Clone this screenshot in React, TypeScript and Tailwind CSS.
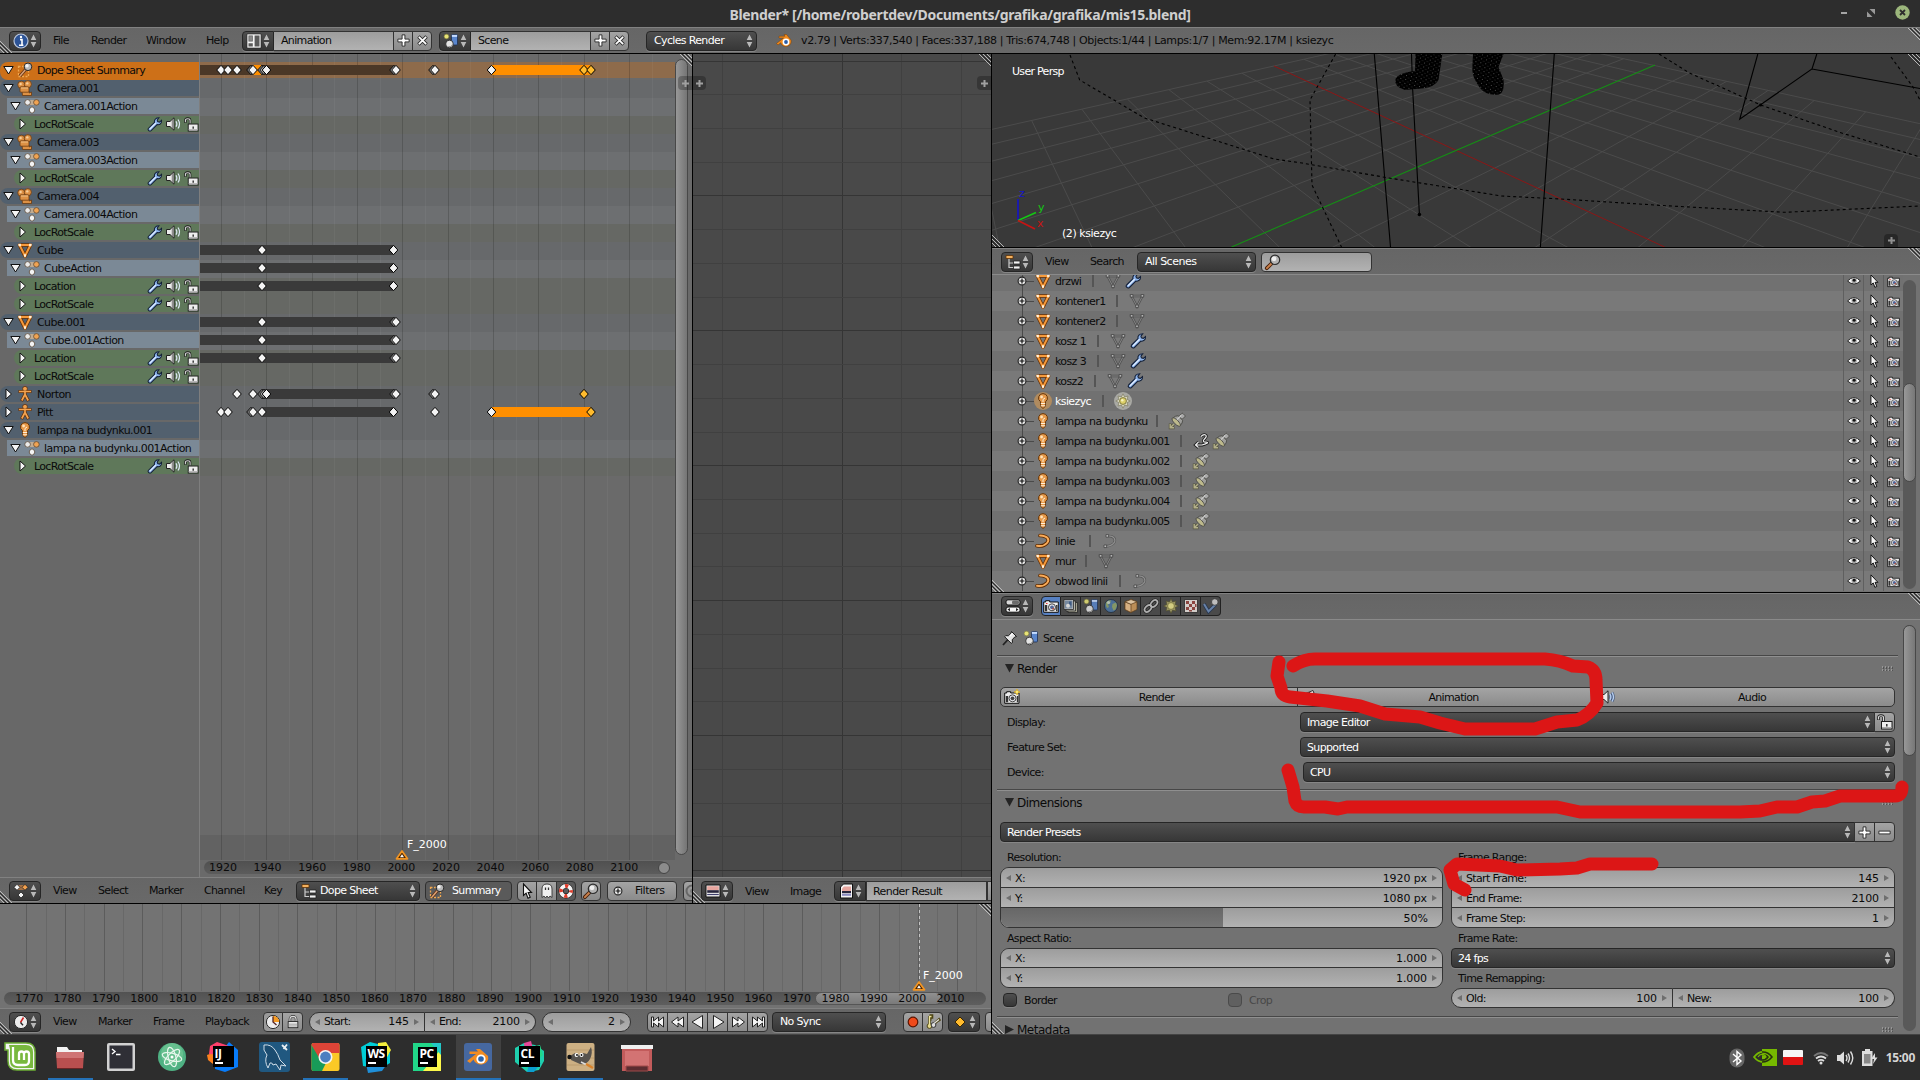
import React from "react";

type IconName = keyof typeof ICONS;

const ICONS = {
  info: (
    <g>
      <circle cx="8" cy="8" r="7" fill="#2c5396" stroke="#b9c6dc" strokeWidth="1.2" />
      <path d="M7 6.6h2v5.4M6 12.2h4.4" stroke="#fff" strokeWidth="1.6" fill="none" />
      <circle cx="8" cy="4" r="1.2" fill="#fff" />
    </g>
  ),
  layout: (
    <g>
      <path d="M1 1h14v14H1z" fill="#f4f4f4" stroke="#222" strokeWidth=".6" />
      <path d="M2.500 2.500h4.300v6H2.500zM2.500 10.200h4.300v3.300H2.500zM8.600 2.500h4.900v11H8.600z" fill="#5a5a5a" />
      <path d="M3.200 3.200h3v4.600h-3z" fill="#8a8a8a" />
    </g>
  ),
  scene: (
    <g>
      <circle cx="3.500" cy="3.500" r="2.3" fill="#e8e378" stroke="#8d8a3d" strokeWidth=".6" />
      <rect x="8.500" y="1.5" width="6" height="10.5" rx="1" fill="#5a86cc" stroke="#1d2f52" strokeWidth=".8" />
      <rect x="8.900" y="1.900" width="5.200" height="2" fill="#c5dcff" />
      <circle cx="6.500" cy="11" r="3.800" fill="#e4e4e4" stroke="#222" strokeWidth=".8" />
      <path d="M4 13a3.500 3.500 0 0 0 6-2.500 5 5 0 0 1-6 2.500" fill="#8a8a8a" />
    </g>
  ),
  blender: (
    <g>
      <path d="M.5 10.500 7.500 5H3V3.200h6L8 1.500h2.500L15 7a5 4.700 0 1 1-10.300 2.800L2 12z" fill="#f08a1d" stroke="#7a3c00" strokeWidth=".5" />
      <circle cx="10" cy="9" r="3.400" fill="#fff" />
      <circle cx="10" cy="9" r="1.900" fill="#2a5da8" />
    </g>
  ),
  summary: (
    <g>
      <rect x="1.5" y="4.500" width="10" height="10" fill="none" stroke="#f0a850" strokeWidth="1.300" strokeDasharray="2 1.500" />
      <path d="M3 14 9 7" stroke="#5a2d12" strokeWidth="3" />
      <path d="M3 14 9 7" stroke="#d9a074" strokeWidth="1.600" />
      <circle cx="11" cy="4.800" r="3.800" fill="#b9b9b9" stroke="#2a2a2a" />
      <circle cx="10" cy="3.800" r="1.700" fill="#f4f4f4" />
    </g>
  ),
  camera: (
    <g fill="#dd9145" stroke="#6a3a10" strokeWidth=".8">
      <path d="M5 11h7v2l2.500-1v3.500h-9z" />
      <circle cx="4.300" cy="4.800" r="3.600" />
      <circle cx="10.800" cy="4.200" r="3.600" />
      <rect x="3" y="6.800" width="9" height="5.400" rx="1" />
      <circle cx="3.600" cy="4" r="1.200" fill="#f6cf9c" stroke="none" />
      <circle cx="10.300" cy="3.400" r="1.200" fill="#f6cf9c" stroke="none" />
      <path d="M4 8h7" stroke="#f6cf9c" />
    </g>
  ),
  action: (
    <g stroke="#5a4937" strokeWidth=".8">
      <path d="M3 2h10v5H3z" fill="#d8b890" stroke="none" opacity=".75" />
      <circle cx="3.600" cy="4.400" r="2.800" fill="#ebebeb" />
      <circle cx="12.400" cy="4.400" r="2.800" fill="#f0a352" />
      <path d="M8 8.800q2.800 1 2.800 3.200T8 15.300Q5.200 14.200 5.200 12T8 8.800z" fill="#f4f4f4" />
    </g>
  ),
  dope: (
    <g stroke="#222" strokeWidth=".8">
      <path d="M4 2h8v5H4z" fill="#a06f45" stroke="none" />
      <path d="m4 1.300 3 3-3 3-3-3zM8 9l3 3-3 3-3-3z" fill="#f4f4f4" />
      <path d="m12 1.300 3 3-3 3-3-3z" fill="#f3a14e" />
    </g>
  ),
  mesh: (
    <g>
      <path d="M2.500 3h11L8 14z" fill="none" stroke="#6b3000" strokeWidth="3.600" strokeLinejoin="round" />
      <path d="M2.500 3h11L8 14z" fill="none" stroke="#f59a3c" strokeWidth="2" />
      <path d="M1.500 1.800h2.400v2.400H1.500zM12.100 1.800h2.400v2.400h-2.400zM6.900 12.300h2.200v2.400H6.900z" fill="#fff1dc" />
    </g>
  ),
  meshdata: (
    <g>
      <path d="M2.500 3h11L8 13.500z" fill="none" stroke="#505050" strokeWidth="2.400" />
      <path d="M2.500 3h11L8 13.500z" fill="none" stroke="#858585" strokeWidth="1" />
      <path d="M1.300 1.500h2.600v2.600H1.300zM12.100 1.500h2.600v2.600h-2.600zM6.700 12h2.600v2.600H6.700z" fill="#b5b5b5" stroke="#444" strokeWidth=".8" />
    </g>
  ),
  armature: (
    <g>
      <path d="M1.500 5.500h13M8 5v4M8 8.500 4.500 15M8 8.500 11.500 15" stroke="#63300a" strokeWidth="3.200" fill="none" />
      <circle cx="8" cy="2.800" r="2.400" fill="#f2a250" stroke="#63300a" strokeWidth=".8" />
      <path d="M2 5.500h12M8 5v4M8 8.500 4.800 14.500M8 8.500l3.200 6" stroke="#f2a250" strokeWidth="1.700" fill="none" />
    </g>
  ),
  lamp: (
    <g>
      <path d="M8 .6a4.400 4.400 0 0 1 2.600 8l-.3 4.600L8 15.600l-2.300-2.400-.3-4.600A4.400 4.400 0 0 1 8 .6z" fill="#e79a4a" stroke="#643408" strokeWidth="1" />
      <path d="M5.800 10.500h4.400M5.800 12.700h4.400" stroke="#fff0da" strokeWidth="1.100" />
      <circle cx="6.600" cy="4" r="1.400" fill="#ffe2b8" />
      <path d="M8 9V6.500l2-1.500" stroke="#fff0da" fill="none" />
    </g>
  ),
  curve: (
    <g fill="none">
      <path d="M5 2.500c8 .5 10 4 7 7.500-2.500 2.800-6 3.500-10 2.800" stroke="#5e2b00" strokeWidth="3.600" strokeLinecap="round" />
      <path d="M5 2.500c8 .5 10 4 7 7.500-2.500 2.800-6 3.500-10 2.800" stroke="#f9ac5a" strokeWidth="1.900" strokeLinecap="round" />
    </g>
  ),
  curvedata: (
    <g>
      <path d="M5.500 3c7-.5 9 4 6 7.500-2 2-4 2.700-8 2.800" stroke="#555" strokeWidth="2.400" fill="none" />
      <path d="M5.500 3c7-.5 9 4 6 7.500-2 2-4 2.700-8 2.800" stroke="#8f8f8f" strokeWidth="1.200" fill="none" />
      <path d="M4 1.600h2.600v2.600H4zM2 12h2.600v2.600H2z" fill="#bcbcbc" stroke="#444" strokeWidth=".8" />
    </g>
  ),
  wrench: (
    <g>
      <path d="M1.600 12 8 5.600C7.400 2.800 9.500.8 12.700.8L10.900 3.200l.5 1.700 1.900.5 2.200-1.900c.3 3.200-1.800 5.200-4.700 4.600l-6.400 6.400c-1.700 1.400-4.200-.8-2.800-2.500z" fill="#8db4ec" stroke="#142038" strokeWidth="1.100" />
      <path d="M3 12.900 9.600 6.300" stroke="#e2eeff" strokeWidth="1.300" />
    </g>
  ),
  speaker: (
    <g>
      <path d="M1.500 5.500H5L9 1.800v12.400L5 10.500H1.500z" fill="#ececec" stroke="#222" strokeWidth="1" />
      <path d="M7.400 4v8" stroke="#8f8f8f" strokeWidth="1.400" />
      <path d="M11 5.200q1.800 2.800 0 5.600M13 3.500q3 4.500 0 9" stroke="#dbe7f4" strokeWidth="1.200" fill="none" />
    </g>
  ),
  audio: (
    <g>
      <path d="M1.500 5.500H5L9 1.800v12.400L5 10.500H1.500z" fill="#ececec" stroke="#222" strokeWidth="1" />
      <path d="M11 5.200q1.800 2.800 0 5.600M13 3.500q3 4.500 0 9" stroke="#3f5478" strokeWidth="2.600" fill="none" />
      <path d="M11 5.200q1.800 2.800 0 5.600M13 3.500q3 4.500 0 9" stroke="#b7cdee" strokeWidth="1.400" fill="none" />
    </g>
  ),
  unlock: (
    <g>
      <path d="M1.500 6V3.500q0-2 2.500-2t2.500 2V7" stroke="#1c1c1c" strokeWidth="2.600" fill="none" />
      <path d="M1.500 5.500V3.600q0-1.800 2.500-1.800t2.500 1.800V7" stroke="#d8d8d8" strokeWidth="1.100" fill="none" />
      <rect x="4.500" y="7.500" width="10.500" height="7.500" fill="#ededed" stroke="#1c1c1c" />
      <path d="M5 13.500h9.500" stroke="#aaa" />
      <path d="M9.800 10v2.500" stroke="#222" strokeWidth="1.400" />
    </g>
  ),
  lock: (
    <g>
      <path d="M4.500 8V4.500a3.500 3 0 0 1 7 0V8" stroke="#333" strokeWidth="2.800" fill="none" />
      <path d="M4.500 8V4.500a3.500 3 0 0 1 7 0V8" stroke="#ddd" strokeWidth="1.300" fill="none" />
      <rect x="2.500" y="7.500" width="11" height="7" fill="#e8e8e8" stroke="#222" />
      <path d="M3 10.500h10M3 12.500h10" stroke="#999" />
    </g>
  ),
  plus: <path d="M6.500 2h3v4.500H14v3H9.500V14h-3V9.500H2v-3h4.500z" fill="#fff" stroke="#2b2b2b" />,
  minus: <path d="M2 6.500h12v3H2z" fill="#fff" stroke="#2b2b2b" />,
  cross: (
    <g>
      <path d="m3 3 10 10M13 3 3 13" stroke="#2b2b2b" strokeWidth="4.200" />
      <path d="m3.500 3.500 9 9M12.500 3.500l-9 9" stroke="#fff" strokeWidth="2.200" />
    </g>
  ),
  tree: (
    <g>
      <path d="M4 4v10M4 9h5M4 13.500h5" stroke="#ccc" strokeWidth="1.200" fill="none" />
      <path d="M1 1.500h7v3H1z" fill="#f4b15e" stroke="#5b3108" strokeWidth=".8" />
      <path d="M8.500 7h6.500v3H8.500zM8.500 12h6.500v3H8.500z" fill="#f2f2f2" stroke="#222" strokeWidth=".8" />
    </g>
  ),
  cursor: <path d="M4.500 1v11.500l2.600-2.300L9 15.200l2.200-.9-2-4.800h3.300z" fill="#f5f5f5" stroke="#111" strokeWidth="1.100" />,
  ghost: (
    <g>
      <path d="M3 14.500V6q0-5 5-5t5 5v8.500l-2-1.500-1.500 2L8 13l-1.500 2L5 13z" fill="#f0f0f0" stroke="#333" strokeWidth=".9" />
      <path d="M6.500 4.500v2.500M9.500 4.500v2.500" stroke="#333" strokeWidth="1.300" />
    </g>
  ),
  buoy: (
    <g fill="none">
      <circle cx="8" cy="8" r="5" stroke="#222" strokeWidth="5.200" />
      <circle cx="8" cy="8" r="5" stroke="#f5f5f5" strokeWidth="3.800" />
      <circle cx="8" cy="8" r="5" stroke="#dd3d2c" strokeWidth="3.800" strokeDasharray="3.200 4.654" strokeDashoffset="1.600" />
    </g>
  ),
  search: (
    <g>
      <path d="M1.800 14.200 6.500 9.500" stroke="#46200b" strokeWidth="3.800" strokeLinecap="round" />
      <path d="M1.900 14.100 6.500 9.500" stroke="#c9804c" strokeWidth="2" strokeLinecap="round" />
      <circle cx="10" cy="5.800" r="4.700" fill="#b4b4b4" stroke="#2d2d2d" strokeWidth="1.200" />
      <circle cx="9" cy="4.800" r="2.400" fill="#efefef" />
    </g>
  ),
  expand: (
    <g>
      <circle cx="8" cy="8" r="3.900" fill="#e8e8e8" stroke="#222" strokeWidth="1.100" />
      <path d="M8 5.500v5M5.500 8h5" stroke="#111" strokeWidth="1.200" />
    </g>
  ),
  image: (
    <g>
      <path d="M1 2h14v12H1z" fill="#f0f0f0" stroke="#111" />
      <path d="M2.200 3.200h11.600v4H2.200z" fill="#e7a69f" />
      <path d="M2.200 7.200h11.600v2.600H2.200z" fill="#27253d" />
      <path d="M2.200 11.500h11.600" stroke="#3e3e6c" strokeWidth="1.200" />
    </g>
  ),
  picture: (
    <g>
      <path d="M5.500 1h9v14h-12V4z" fill="#f4f4f4" stroke="#111" />
      <path d="M6 3.500h7v4.500H4V5.500z" fill="#e7a69f" />
      <path d="M4 8h9v2.200H4z" fill="#27253d" />
      <path d="M4 11.800h9" stroke="#8a8ac0" strokeWidth="2" />
    </g>
  ),
  clock: (
    <g>
      <circle cx="8" cy="8" r="6.600" fill="#ededed" stroke="#2b2b2b" />
      <path d="m10.500 3.500-3 5" stroke="#c22" strokeWidth="1.500" fill="none" />
      <path d="m7.500 8.500 2.500 2.800" stroke="#222" strokeWidth="1.300" />
    </g>
  ),
  range: (
    <g>
      <circle cx="8" cy="8" r="6.600" fill="#ededed" stroke="#2b2b2b" />
      <path d="M8 8V1.800A6.200 6.200 0 0 1 14.200 8z" fill="#f49a22" />
      <path d="M8 2.500V8l3.500 3" stroke="#522" strokeWidth="1.300" fill="none" />
    </g>
  ),
  rec: <circle cx="8" cy="8" r="4.800" fill="#f04a1a" stroke="#5b1400" strokeWidth="1.200" />,
  keys: (
    <g>
      <path d="M4.500 1.500h2.500v2H4.500v2h2M4.500 2v9M9 10l5-4.500 1 1.500" stroke="#4c4415" strokeWidth="2.600" fill="none" />
      <circle cx="4.500" cy="12" r="2.400" fill="#e6da8d" stroke="#4c4415" />
      <circle cx="8.500" cy="11" r="2.400" fill="#ddd" stroke="#333" />
      <path d="M4.500 2v9M4.500 2.500h2" stroke="#f0e69b" strokeWidth="1.300" fill="none" />
      <path d="M9 9.500 14 5.500" stroke="#e5e5e5" strokeWidth="1.300" />
    </g>
  ),
  keyframe: <path d="m8 3 5 5-5 5-5-5z" fill="#ffbb2e" stroke="#3a2700" />,
  propedit: (
    <g>
      <rect x="1" y="1.800" width="14" height="5.200" rx="2" fill="#d8d8d8" stroke="#111" />
      <rect x="7" y="2.500" width="7" height="3.800" rx="1.500" fill="#6b6b6b" />
      <rect x="1" y="9" width="14" height="5.200" rx="2" fill="#f4f4f4" stroke="#111" />
      <path d="m5 10-2.500 1.600L5 13.200zM11 10l2.500 1.600-2.500 1.600z" fill="#222" />
    </g>
  ),
  render: (
    <g>
      <path d="M.7 4h2V2.700h4V4h8.600v10.300H.7z" fill="#ededed" stroke="#111" strokeWidth="1" />
      <path d="M1.800 7h2.400v6.300H1.800zM13 7h1.500v6.300H13z" fill="#333" />
      <path d="M4.200 8h9v4h-9z" fill="#bdbdbd" />
      <path d="M3 5.500h1.500" stroke="#e33" strokeWidth="1.200" />
      <circle cx="9" cy="9.300" r="3.500" fill="#e9e9ee" stroke="#333" strokeWidth=".9" />
      <circle cx="9" cy="9.300" r="1.900" fill="#51679a" />
      <path d="M9.300 9.800h1.800v1.800H9.300z" fill="#b2523f" />
    </g>
  ),
  renderstar: (
    <g>
      <path d="M.7 4h2V2.700h4V4h8.300v10.300H.7z" fill="#ededed" stroke="#111" strokeWidth="1" />
      <path d="M1.800 7h2.400v6.300H1.800zM12.800 7h1.500v6.300h-1.500z" fill="#333" />
      <circle cx="8.500" cy="9.300" r="3.500" fill="#e9e9ee" stroke="#333" strokeWidth=".9" />
      <circle cx="8.500" cy="9.300" r="1.900" fill="#444" />
      <path d="m13 0 .9 2.100L16 3l-2.100.9L13 6l-.9-2.100L10 3l2.100-.9z" fill="#ffee7a" stroke="#d6a81c" strokeWidth=".7" />
    </g>
  ),
  layers: (
    <g>
      <path d="M5 4.500h9.500v10H5z" fill="#b3b19c" stroke="#222" strokeWidth=".8" />
      <path d="M3 3h9.500v10H3z" fill="#c8c8bc" stroke="#222" strokeWidth=".8" />
      <path d="M1 1.500h9.500v10H1z" fill="#ddd" stroke="#222" strokeWidth=".8" />
      <path d="M2 2.500h7.500v8H2z" fill="#7e93ad" />
      <path d="M6 3.500h2.500v4H6z" fill="#3f5f8e" />
      <circle cx="5" cy="7.800" r="2" fill="#eee" />
    </g>
  ),
  world: (
    <g>
      <circle cx="8" cy="8" r="6.500" fill="#4c76a4" stroke="#1d2a38" strokeWidth=".8" />
      <path d="M3 4.500q3-3 5-2l-1 3-2 1 1 2.500-2 1q-2-2.500-1-5.500M9.500 6l3.500-1.500 1 3-1.500 4-2 1-1.500-3.500z" fill="#8fa56a" />
      <circle cx="5.500" cy="4.500" r="1.600" fill="#d8e4ee" opacity=".7" />
    </g>
  ),
  object: (
    <g stroke="#5c3a14" strokeWidth=".7">
      <path d="m8 1.500 6 2.300v7.700L8 14.500l-6-3V3.800z" fill="#d19a5a" />
      <path d="M8 6.300V14.500l-6-3V3.800z" fill="#eec08a" />
      <path d="m8 1.500 6 2.300L8 6.300 2 3.800z" fill="#f6d8b0" />
    </g>
  ),
  link: (
    <g fill="none">
      <g stroke="#222" strokeWidth="3.400">
        <ellipse cx="5" cy="10.500" rx="2.600" ry="4" transform="rotate(45 5 10.500)" />
        <ellipse cx="11" cy="5.500" rx="2.600" ry="4" transform="rotate(45 11 5.500)" />
      </g>
      <g stroke="#c4c4c4" strokeWidth="1.700">
        <ellipse cx="5" cy="10.500" rx="2.600" ry="4" transform="rotate(45 5 10.500)" />
        <ellipse cx="11" cy="5.500" rx="2.600" ry="4" transform="rotate(45 11 5.500)" />
      </g>
    </g>
  ),
  sun: (
    <g>
      <path d="m8 .8 1.600 3.100L13 3l-.9 3.400L15.200 8l-3.100 1.600L13 13l-3.400-.9L8 15.200l-1.600-3.100L3 13l.9-3.400L.8 8l3.100-1.600L3 3l3.400.9z" fill="#a8a26a" stroke="#55512a" strokeWidth=".7" />
      <circle cx="8" cy="8" r="3.400" fill="#ece48c" stroke="#6f6a2c" strokeWidth=".7" />
    </g>
  ),
  sundata: (
    <g>
      <path d="m8 .8 1.600 3.100L13 3l-.9 3.400L15.200 8l-3.100 1.600L13 13l-3.400-.9L8 15.200l-1.600-3.100L3 13l.9-3.400L.8 8l3.100-1.600L3 3l3.400.9z" fill="#d9d8bf" stroke="#84826a" strokeWidth=".8" />
      <circle cx="8" cy="8" r="3.400" fill="#dcd06a" stroke="#77713a" strokeWidth=".9" />
      <circle cx="7.300" cy="7.300" r="1.200" fill="#f7f3c0" />
    </g>
  ),
  texture: (
    <g>
      <path d="M1.500 1.500h13v13h-13z" fill="#ece4e0" stroke="#222" strokeWidth=".8" />
      <path d="M3 3h3v3H3zM9 3h3v3H9zM6 6h3v3H6zM12 6h1.500v3H12zM3 9h3v3H3zM9 9h3v3H9zM6 12h3v1.500H6z" fill="#98453f" />
    </g>
  ),
  physics: (
    <g>
      <path d="m1 6 4.500 7.500L13 6" stroke="#253550" strokeWidth="3.600" fill="none" />
      <path d="m1 6 4.500 7.500L13 6" stroke="#6d8cb9" strokeWidth="2" fill="none" />
      <circle cx="11.800" cy="4" r="3.300" fill="#d3d3d3" stroke="#333" strokeWidth=".8" />
    </g>
  ),
  pin: (
    <g>
      <path d="M1 15 6 9.500" stroke="#222" strokeWidth="1.800" />
      <path d="m9.500 1.500 5 5-1.800.5-2.500 2.800.3 2.700-1.300.8-6.500-6.500 1-1.200 2.600.2 2.700-2.500z" fill="#e4e4e4" stroke="#1c1c1c" strokeWidth="1" />
      <path d="m8 6 2.500-2.500" stroke="#fff" strokeWidth="1.200" />
    </g>
  ),
  eye: (
    <g>
      <path d="M.6 8Q8 .2 15.400 8 8 14.800.6 8z" fill="#fafafa" stroke="#222" strokeWidth="1.100" />
      <circle cx="8.200" cy="7.600" r="3" fill="#a5a5a5" />
      <circle cx="8.200" cy="7.200" r="1.700" fill="#111" />
    </g>
  ),
  spot: (
    <g>
      <g transform="rotate(45 8 8)" stroke="#4d4d48" strokeWidth=".9">
        <rect x="6" y="-1.500" width="4.500" height="5" rx="1" fill="#a8a8a8" />
        <path d="M5 3.500h6.500q2 2 2 5.500H3q0-3.500 2-5.500z" fill="#9f9f9c" />
        <ellipse cx="8.200" cy="9.300" rx="5.600" ry="2.100" fill="#bdb98c" />
        <path d="M7 1v6" stroke="#cfcfcf" strokeWidth="1.200" />
      </g>
      <path d="M1.200 10.500v4.300h4.300M1.500 14.500l3.300-3.300" stroke="#575640" strokeWidth="2.800" fill="none" />
      <path d="M1.200 11v3.800H5M1.500 14.500l3.300-3.300" stroke="#b2af8a" strokeWidth="1.400" fill="none" />
    </g>
  ),
  anim: (
    <g fill="none">
      <path d="M8 3.500Q10.500 1 12.500 2t-1 4 1.500 3.200T9 12H2.500M5.500 9l-3 3 3 2.500" stroke="#1c1c1c" strokeWidth="3" />
      <path d="M8 3.500Q10.500 1 12.500 2t-1 4 1.500 3.200T9 12H2.500M5.500 9l-3 3 3 2.500" stroke="#eee" strokeWidth="1.200" />
    </g>
  ),
  clapper: (
    <g>
      <path d="m1 6 11-4.500 1 2.500L2 8.500z" fill="#eee" stroke="#111" strokeWidth=".8" />
      <path d="m4 5 1.500 2M8 3.500 9.500 5.500" stroke="#111" strokeWidth="1.600" />
      <path d="M2 8.500h11.500v6H2z" fill="#777" stroke="#111" strokeWidth=".8" />
    </g>
  ),
  first: <MediaPath d="M1.500 3v10h2V9l5 4V9l5 4V3l-5 4V3l-5 4V3z" />,
  prev: <MediaPath d="M8 3v4l5.500-4v10L8 9v4L1.500 8z" />,
  reverse: <MediaPath d="M12.500 1.500v13L2 8z" />,
  play: <MediaPath d="M3.500 1.500v13L14 8z" />,
  next: <MediaPath d="M8 3v4L2.500 3v10L8 9v4l6.500-5z" />,
  last: <MediaPath d="M14.500 3v10h-2V9l-5 4V9l-5 4V3l5 4V3l5 4V3z" />,
} as const;

function MediaPath({ d }: { d: string }) {
  return <path d={d} fill="#f4f4f4" stroke="#222" strokeWidth="1" strokeLinejoin="round" />;
}

function Icon({ name, size = 16, className = "" }: { name: IconName; size?: number; className?: string }) {
  return (
    <svg width={size} height={size} viewBox="0 0 16 16" className={`shrink-0 overflow-visible ${className}`}>
      {ICONS[name]}
    </svg>
  );
}

function UpDown() {
  return (
    <svg width="7" height="14" viewBox="0 0 7 14" className="shrink-0">
      <path d="M3.500.5 6.300 6H.7zM3.500 13.500 6.300 8H.7z" fill="#b9b9b9" />
    </svg>
  );
}

function Corner({ flip = false, className = "" }: { flip?: boolean; className?: string }) {
  return (
    <svg width="12" height="12" viewBox="0 0 12 12" className={`absolute ${className}`}>
      <g transform={flip ? "rotate(180 6 6)" : undefined}>
        <path d="M0 0 12 12M4 0l8 8M8 0l4 4" stroke="#c4c4c4" strokeWidth=".9" />
        <path d="M2 0l10 10M6 0l6 6" stroke="#222" strokeWidth=".9" />
      </g>
    </svg>
  );
}

const HEADER = "relative flex shrink-0 items-center border-t border-[#818181] bg-gradient-to-b from-[#666] to-[#696969] overflow-hidden";
const DARK = "bg-gradient-to-b from-[#4f4f4f] to-[#373737] border border-[#262626] shadow-[0_1px_0_#868686]";
const LIGHT = "bg-gradient-to-b from-[#a4a4a4] to-[#8b8b8b] border border-[#333]";
const FIELD = "bg-gradient-to-b from-[#9d9d9d] to-[#b2b2b2] border-[#333]";

function EditorSelect({ icon, className = "ml-[9px]" }: { icon: IconName; className?: string }) {
  return (
    <div className={`flex h-5 w-8 shrink-0 items-center justify-between rounded-[4px] px-[3px] ${DARK} ${className}`}>
      <Icon name={icon} />
      <UpDown />
    </div>
  );
}

function Menu({ label, w, className = "" }: { label: string; w: number; className?: string }) {
  return (
    <div className={`shrink-0 ${className}`} style={{ width: w }}>
      {label}
    </div>
  );
}

function IdBlock({ icon, label }: { icon: IconName; label: string }) {
  return (
    <div className="flex h-5 w-[190px] shrink-0 rounded-[4px]">
      <div className={`flex w-8 items-center justify-between rounded-l-[4px] px-[3px] ${DARK}`}>
        <Icon name={icon} />
        <UpDown />
      </div>
      <div className={`flex w-[120px] items-center border-y pl-[7px] ${FIELD}`}>{label}</div>
      <div className={`-ml-px flex w-5 items-center justify-center ${LIGHT}`}>
        <Icon name="plus" size={15} />
      </div>
      <div className={`-ml-px flex w-5 items-center justify-center rounded-r-[4px] ${LIGHT}`}>
        <Icon name="cross" size={13} />
      </div>
    </div>
  );
}

function InfoHeader() {
  return (
    <div className={`h-[26px] ${HEADER}`}>
      <EditorSelect icon="info" />
      <Menu label="File" w={38} className="ml-3" />
      <Menu label="Render" w={55} />
      <Menu label="Window" w={60} />
      <Menu label="Help" w={36} />
      <IdBlock icon="layout" label="Animation" />
      <div className="w-[7px]" />
      <IdBlock icon="scene" label="Scene" />
      <div className={`ml-[17px] flex h-5 w-[111px] items-center justify-between rounded-[4px] pl-[7px] pr-[3px] text-white ${DARK}`}>
        Cycles Render
        <UpDown />
      </div>
      <Icon name="blender" className="ml-[19px]" />
      <div className="ml-[9px] whitespace-nowrap tracking-[-0.37px]">
        v2.79 | Verts:337,540 | Faces:337,188 | Tris:674,748 | Objects:1/44 | Lamps:1/7 | Mem:92.17M | ksiezyc
      </div>
      <Corner className="right-0 top-0" />
      <Corner flip className="bottom-0 left-0" />
    </div>
  );
}

type Channel = { kind: "summary" | "object" | "action" | "group"; label: string; icon?: IconName; open?: boolean };

const group = (label: string): Channel => ({ kind: "group", label });
const action = (label: string): Channel => ({ kind: "action", label, icon: "action", open: true });
const object = (label: string, icon: IconName, open = true): Channel => ({ kind: "object", label, icon, open });

const CHANNELS: Channel[] = [
  { kind: "summary", label: "Dope Sheet Summary", icon: "summary", open: true },
  object("Camera.001", "camera"),
  action("Camera.001Action"),
  group("LocRotScale"),
  object("Camera.003", "camera"),
  action("Camera.003Action"),
  group("LocRotScale"),
  object("Camera.004", "camera"),
  action("Camera.004Action"),
  group("LocRotScale"),
  object("Cube", "mesh"),
  action("CubeAction"),
  group("Location"),
  group("LocRotScale"),
  object("Cube.001", "mesh"),
  action("Cube.001Action"),
  group("Location"),
  group("LocRotScale"),
  object("Norton", "armature", false),
  object("Pitt", "armature", false),
  object("lampa na budynku.001", "lamp"),
  action("lampa na budynku.001Action"),
  group("LocRotScale"),
];

const CHANNEL_STYLE = {
  summary: "h-[18px] rounded-l-[8px] bg-[#cd7018] pl-[3px] pb-[2px]",
  object: "mb-[2px] h-[16px] rounded-l-[8px] bg-[#52606e] pl-[3px]",
  action: "mb-[2px] ml-[7px] h-[16px] bg-[#7b8996] pl-[3px]",
  group: "mb-[2px] ml-[14px] h-[16px] rounded-l-[8px] bg-[#5f785a] pl-[3px]",
};

const CHANNEL_TEXT = {
  summary: "ml-[4px] tracking-[-0.72px]",
  object: "ml-[4px] tracking-[-0.58px]",
  action: "ml-[4px] tracking-[-0.54px]",
  group: "ml-[6px]",
};

function Triangle({ open = false }: { open?: boolean }) {
  return (
    <svg width="11" height="12" viewBox="0 0 11 12" className="shrink-0">
      <path d={open ? "M.8 2.500h9.400L5.500 10z" : "M3 1v10l5.500-5z"} fill="#f6f6f6" stroke="#111" strokeWidth="1" />
    </svg>
  );
}

function ChannelRow({ c }: { c: Channel }) {
  return (
    <div className={`flex shrink-0 items-center overflow-hidden whitespace-nowrap ${CHANNEL_STYLE[c.kind]}`}>
      <Triangle open={c.open} />
      {c.icon && <Icon name={c.icon} className="ml-[3px]" />}
      <span className={`pt-[2px] ${CHANNEL_TEXT[c.kind]}`}>{c.label}</span>
      {c.kind === "group" && (
        <div className="ml-auto flex items-center gap-[3px]">
          <Icon name="wrench" size={15} />
          <Icon name="speaker" size={16} />
          <Icon name="unlock" size={15} />
        </div>
      )}
    </div>
  );
}

const STRIP = { summary: "#8e6b4b", object: "#67696b", action: "#6d6f71", group: "#666864" };

type Track = { row: number; bars: [number, number, string][]; keys: [number, string?][] };
const W = "#f4f4f4";
const G = "#a0a0a0";
const Y = "#ffbb2e";
const DK = "#3a3a3a";
const cubeTrack = (row: number, two: boolean): Track => ({
  row,
  bars: [[200, 394, DK]],
  keys: two ? [[262], [394, G], [396]] : [[262], [393.5]],
});
const TRACKS: Track[] = [
  {
    row: 0,
    bars: [[200, 394, "#4b3827"], [253, 261, "#ff8f00"], [491.5, 591, "#ff8f00"]],
    keys: [[221], [228], [237], [251, G], [253], [262, G], [264, G], [266.5], [394, G], [396], [433, G], [435], [491.5], [584, Y], [591, Y]],
  },
  cubeTrack(10, false),
  cubeTrack(11, false),
  cubeTrack(12, false),
  cubeTrack(14, true),
  cubeTrack(15, true),
  cubeTrack(16, true),
  {
    row: 18,
    bars: [[262, 394, DK]],
    keys: [[237], [253], [262, G], [264, G], [266.5], [394, G], [396], [433, G], [435], [584, Y]],
  },
  {
    row: 19,
    bars: [[262, 394, DK], [491.5, 591, "#ff8f00"]],
    keys: [[221], [228], [251, G], [253], [262], [393.500], [435], [491.5], [591, Y]],
  },
];

function DopeCanvas() {
  return (
    <svg width="475" height="806" viewBox="200 54 475 806" className="block">
      <rect x="200" y="54" width="475" height="806" fill="#6a6a6a" />
      {CHANNELS.map((c, i) => (
        <rect key={i} x="200" y={62 + i * 18} width="475" height={c.kind === "summary" ? 16 : 18} fill={STRIP[c.kind]} />
      ))}
      <rect x="200" y="835" width="475" height="25" fill="#626262" />
      {Array.from({ length: 10 }, (_, i) => (
        <g key={i}>
          <path d={`M${Math.round(221 + i * 45.35) + 0.5} 54V860`} stroke="#000" strokeOpacity=".16" />
          <path d={`M${Math.round(243.7 + i * 45.35) + 0.5} 54V860`} stroke="#fff" strokeOpacity=".045" />
        </g>
      ))}
      {TRACKS.map((t) => {
        const y = 70 + t.row * 18;
        return (
          <g key={t.row}>
            {t.bars.map(([a, b, f], i) => (
              <rect key={i} x={a} y={y - 5} width={b - a} height="10" fill={f} />
            ))}
            {t.keys.map(([x, f], i) => (
              <path key={i} d={`M${x} ${y - 4.700}l4.300 4.700-4.300 4.700-4.300-4.700z`} fill={f ?? W} stroke="#000" strokeWidth="1" />
            ))}
          </g>
        );
      })}
    </svg>
  );
}

function Marker({ className = "" }: { className?: string }) {
  return (
    <svg width="14" height="10" viewBox="0 0 14 10" className={`absolute ${className}`}>
      <path d="M7 1 12.500 8.800H1.500z" fill="#4a2500" stroke="#f29422" strokeWidth="1.700" strokeLinejoin="round" />
      <path d="M7 4.200 9 7.200H5z" fill="#fff" />
    </svg>
  );
}

function Tab({ className = "" }: { className?: string }) {
  return (
    <div className={`absolute flex h-[14px] w-[14px] items-center justify-center bg-black/25 ${className}`}>
      <svg width="7" height="7" viewBox="0 0 7 7">
        <path d="M3.500 0v7M0 3.500h7" stroke="#a0a0a0" strokeWidth="2" />
      </svg>
    </div>
  );
}

function DopeSheet() {
  return (
    <div className="relative flex h-[849px] w-[692px] flex-col overflow-hidden bg-[#6a6a6a]">
      <div className="flex h-[823px]">
        <div className="flex w-[200px] shrink-0 flex-col border-r border-[#7e7e7e] bg-[#686868] pt-[8px]">
          {CHANNELS.map((c, i) => (
            <ChannelRow key={i} c={c} />
          ))}
        </div>
        <div className="relative flex w-[475px] flex-col">
          <DopeCanvas />
          <div className="ml-1 mr-2 mt-px flex h-[13px] items-center rounded-full bg-gradient-to-b from-[#505050] to-[#5c5c5c] pl-[3px] tracking-normal">
            {Array.from({ length: 10 }, (_, i) => (
              <span key={i} className="w-[44.6px] shrink-0 pl-[2px]">
                {1920 + i * 20}
              </span>
            ))}
            <div className="ml-[5px] h-3 w-3 shrink-0 rounded-full border border-[#444] bg-[#8c8c8c]" />
          </div>
          <span className="absolute left-[207px] top-[784px] text-white tracking-normal">F_2000</span>
          <Marker className="left-[195px] top-[796px]" />
        </div>
        <div className="w-[17px] pt-[5px]">
          <div className="h-[796px] w-[13px] rounded-full border border-[#484848] bg-gradient-to-r from-[#989898] to-[#757575]" />
        </div>
      </div>
      <div className={`h-[26px] ${HEADER}`}>
        <EditorSelect icon="dope" />
        <Menu label="View" w={45} className="ml-3" />
        <Menu label="Select" w={51} />
        <Menu label="Marker" w={55} />
        <Menu label="Channel" w={60} />
        <Menu label="Key" w={32} />
        <div className={`flex h-5 w-[124px] shrink-0 items-center rounded-[4px] pl-1 pr-[3px] text-white ${DARK}`}>
          <Icon name="tree" />
          <span className="ml-[3px] flex-1">Dope Sheet</span>
          <UpDown />
        </div>
        <div className="ml-[5px] flex h-5 w-[87px] shrink-0 items-center rounded-[4px] border border-[#2f2f2f] bg-[#5a5a5a] pl-[3px] text-white">
          <Icon name="summary" />
          <span className="ml-[7px]">Summary</span>
        </div>
        <div className="ml-[5px] flex h-5 shrink-0">
          <div className={`flex w-5 items-center justify-center rounded-l-[4px] ${LIGHT}`}><Icon name="cursor" /></div>
          <div className={`-ml-px flex w-[21px] items-center justify-center ${LIGHT}`}><Icon name="ghost" /></div>
          <div className="-ml-px flex w-[20px] items-center justify-center rounded-r-[4px] border border-[#333] bg-[#5a5a5a]"><Icon name="buoy" /></div>
        </div>
        <div className={`ml-[5px] flex h-5 w-5 shrink-0 items-center justify-center rounded-[4px] ${LIGHT}`}><Icon name="search" /></div>
        <div className={`ml-[6px] flex h-5 w-[70px] shrink-0 items-center rounded-[4px] pl-[2px] ${LIGHT}`}>
          <Icon name="expand" />
          <span className="ml-[9px] tracking-[-0.5px]">Filters</span>
        </div>
        <div className={`ml-[6px] flex h-5 w-8 shrink-0 items-center rounded-[4px] ${LIGHT}`}>
          <svg width="16" height="16"><circle cx="8" cy="8" r="5.500" fill="none" stroke="#666" strokeWidth="2" /><circle cx="8" cy="8" r="2" fill="#777" /></svg>
        </div>
      </div>
      <Corner className="right-0 top-0" />
      <Corner flip className="bottom-0 left-0" />
      <Tab className="right-0 top-[22px] rounded-l-[4px]" />
    </div>
  );
}

function ImageEditor() {
  return (
    <div className="relative flex h-[849px] w-[298px] flex-col overflow-hidden">
      <svg width="298" height="823" viewBox="693 54 298 823" className="block shrink-0">
        <rect x="693" y="54" width="298" height="823" fill="#494949" />
        {[722.5, 782.5, 842.5, 901.5, 961.5].map((x, i) => (
          <path key={x} d={`M${x} 54V877`} stroke={i === 2 ? "#353535" : "#404040"} />
        ))}
        {Array.from({ length: 25 }, (_, i) => (
          <path key={i} d={`M693 ${Math.round(60.500 + i * 33.73) + 0.5}H991`} stroke={i % 4 === 0 ? "#353535" : "#404040"} />
        ))}
      </svg>
      <div className={`h-[26px] ${HEADER}`}>
        <EditorSelect icon="image" className="ml-[8px]" />
        <div className="flex shrink-0 pt-[2px]">
          <Menu label="View" w={45} className="ml-3" />
          <Menu label="Image" w={44} />
        </div>
        <div className={`flex h-5 w-[32px] shrink-0 items-center justify-between rounded-l-[4px] px-[3px] ${DARK}`}>
          <Icon name="picture" />
          <UpDown />
        </div>
        <div className={`flex h-5 w-[121px] shrink-0 items-center border pl-[6px] pt-[2px] tracking-[-0.58px] ${FIELD}`}>Render Result</div>
        <div className={`h-5 w-5 shrink-0 ${LIGHT}`} />
      </div>
      <Corner className="right-0 top-0" />
      <Corner flip className="bottom-0 left-0" />
      <Tab className="left-[-1px] top-[22px] rounded-r-[4px]" />
      <Tab className="right-0 top-[22px] rounded-l-[4px]" />
    </div>
  );
}

function NumField({ label, value, className = "" }: { label?: string; value: string; className?: string }) {
  return (
    <div className={`flex items-center px-[5px] ${FIELD} ${className}`}>
      <svg width="5" height="6" className="shrink-0"><path d="M5 0v6L0 3z" fill="#6e6e6e" /></svg>
      <span className="ml-[4px] flex-1 whitespace-nowrap">{label}</span>
      <span className="mr-[5px] whitespace-nowrap tracking-[-0.1px]">{value}</span>
      <svg width="5" height="6" className="shrink-0"><path d="M0 0v6l5-3z" fill="#6e6e6e" /></svg>
    </div>
  );
}

function Timeline() {
  const transport: IconName[] = ["first", "prev", "reverse", "play", "next", "last"];
  return (
    <div className="relative flex h-[130px] w-[991px] flex-col overflow-hidden bg-[#727272]">
      <div className="relative h-[87px]">
        <svg width="991" height="87" className="block">
          <rect width="991" height="87" fill="#737373" />
          {Array.from({ length: 25 }, (_, i) => (
            <g key={i}>
              <path d={`M${Math.round(26 + i * 38.780) + 0.5} 0V87`} stroke="#5c5c5c" />
              <path d={`M${Math.round(45.500 + i * 38.780) + 0.5} 0V87`} stroke="#686868" />
            </g>
          ))}
          <path d="M919.500 0V78" stroke="#c6c6c6" strokeDasharray="3 3" />
        </svg>
        <span className="absolute left-[923px] top-[65px] text-white tracking-normal">F_2000</span>
        <Marker className="left-[912px] top-[77px]" />
      </div>
      <div className="relative ml-1 mt-px h-[13px] w-[982px] rounded-full bg-gradient-to-b from-[#525252] to-[#5e5e5e]">
        <div className="absolute left-[811px] top-0 h-[13px] w-[127px] rounded-full border border-[#555] bg-gradient-to-b from-[#909090] to-[#7a7a7a]" />
        <div className="absolute left-[6px] top-0 flex h-[13px] items-center tracking-normal">
          {Array.from({ length: 25 }, (_, i) => (
            <span key={i} className="w-[38.4px] shrink-0 text-center">
              {1770 + i * 10}
            </span>
          ))}
        </div>
      </div>
      <div className={`mt-[3px] h-[26px] ${HEADER}`}>
        <EditorSelect icon="clock" />
        <Menu label="View" w={45} className="ml-3" />
        <Menu label="Marker" w={55} />
        <Menu label="Frame" w={52} />
        <Menu label="Playback" w={58} />
        <div className="flex h-5 shrink-0">
          <div className="flex w-5 items-center justify-center rounded-l-[4px] border border-[#333] bg-[#9a9a9a]"><Icon name="range" /></div>
          <div className={`-ml-px flex w-[21px] items-center justify-center rounded-r-[4px] ${LIGHT}`}><Icon name="lock" size={14} /></div>
        </div>
        <NumField label="Start:" value="145" className="ml-[6px] h-5 w-[116px] shrink-0 rounded-l-[10px] border" />
        <NumField label="End:" value="2100" className="h-5 w-[111px] shrink-0 rounded-r-[10px] border border-l-0" />
        <NumField value="2" className="ml-[6px] h-5 w-[89px] shrink-0 rounded-full border" />
        <div className="ml-[16px] flex h-5 w-[120px] shrink-0">
          {transport.map((t, i) => (
            <div key={t} className={`-mr-px flex w-[21px] items-center justify-center ${LIGHT} ${i === 0 ? "rounded-l-[4px]" : ""} ${i === 5 ? "rounded-r-[4px]" : ""}`}>
              <Icon name={t} />
            </div>
          ))}
        </div>
        <div className={`ml-[5px] flex h-5 w-[114px] shrink-0 items-center justify-between rounded-[4px] pl-[7px] pr-[3px] text-white ${DARK}`}>
          No Sync
          <UpDown />
        </div>
        <div className="ml-[17px] flex h-5 shrink-0">
          <div className={`flex w-5 items-center justify-center rounded-l-[4px] ${LIGHT}`}><Icon name="rec" /></div>
          <div className={`-ml-px flex w-[21px] items-center justify-center rounded-r-[4px] ${LIGHT}`}><Icon name="keys" /></div>
        </div>
        <div className={`ml-[5px] flex h-5 w-8 shrink-0 items-center justify-between rounded-[4px] px-[3px] ${DARK}`}>
          <Icon name="keyframe" />
          <UpDown />
        </div>
        <div className={`ml-[5px] h-5 w-10 shrink-0 rounded-[4px] ${LIGHT}`} />
      </div>
      <Corner className="right-0 top-0" />
      <Corner flip className="bottom-0 left-0" />
    </div>
  );
}

// Ground plane projection: homogeneous origin plus one vector per grid axis.
const R = -0.0665;
const GR = 0.0596;
function project(i: number, j: number) {
  const w = 1 + R * i + GR * j;
  const x = (1457 + R * i * 930 + GR * j * 2070) / w;
  const y = (150.7 + R * i * -93.4 + GR * j * -113) / w;
  return `${x.toFixed(1)} ${y.toFixed(1)}`;
}

function Viewport() {
  const steps = Array.from({ length: 17 }, (_, k) => k - 8).filter((k) => k !== 0);
  return (
    <div className="relative h-[193px] w-[928px] overflow-hidden bg-[#393939]">
      <svg width="928" height="193" viewBox="992 54 928 193" className="block">
        <defs>
          <pattern id="speckle" width="5" height="4" patternUnits="userSpaceOnUse" patternTransform="rotate(12)">
            <rect width="5" height="4" fill="#000" />
            <rect x="1" y="1" width="1" height="1" fill="#4a4a4a" />
            <rect x="3.500" y="3" width="1" height=".8" fill="#333" />
          </pattern>
        </defs>
        <g stroke="#4b4b4b" strokeWidth="1" fill="none">
          {steps.map((k) => (
            <g key={k}>
              <path d={`M${project(k, 8)}L${project(k, -7.4)}`} />
              <path d={`M${project(-8, k)}L${project(7.4, k)}`} />
            </g>
          ))}
        </g>
        <path d="M1274 66 1664.600 247" stroke="#8c1616" />
        <path d="M1231.500 247 1655 65" stroke="#168c16" strokeWidth="1.200" />
        <g fill="none" stroke="#000" strokeWidth="1.100" strokeDasharray="3 3">
          <path d="M1070 55 1079.700 80 1144.500 118 1274 159 1302 163 1389 178 1501.700 196 1561 199 1665.800 205.700 1784.400 212.300 1920 206" />
          <path d="M1335.600 54 1310 100 1312 185 1341.500 247" />
          <path d="M1659 54 1689.500 73 1760.600 105 1841.700 133 1920 157" />
          <path d="M1891 57 1913 87 1920 100" />
        </g>
        <g fill="none" stroke="#000" strokeWidth="1.100">
          <path d="M1374.300 54 1390.500 247M1554.300 54 1540.400 247M1411.500 54 1412.700 90 1419.400 214" />
          <path d="M1757.800 54 1739.700 119.300 1812 69 1816.800 54M1812 69 1920 88.500" />
        </g>
        <circle cx="1419.400" cy="214.500" r="1.800" />
        <circle cx="1760.600" cy="105" r="1.500" />
        <path d="M1415.500 54H1442.300L1440 70 1438.500 80Q1435 87 1422 88.500L1405 90Q1394 87 1395.500 79 1398 73 1415 71z" fill="url(#speckle)" />
        <path d="M1473 54H1503.600L1498.500 67 1503.600 80Q1505 92 1499 94.500 1486 96 1480 88 1471 76 1472.400 66z" fill="url(#speckle)" />
        <g fill="none" strokeWidth="1.600">
          <path d="M1018 220V199" stroke="#1414c8" />
          <path d="M1018 220.500 1036 212.500" stroke="#14c814" />
          <path d="M1018 220.500 1035 229" stroke="#c81414" />
        </g>
      </svg>
      <span className="absolute left-[20px] top-[11px] text-white tracking-[-0.7px]">User Persp</span>
      <span className="absolute left-[70px] top-[173px] text-white tracking-[-0.45px]">(2) ksiezyc</span>
      <span className="absolute left-[27px] top-[133px] text-[#1414c8]">z</span>
      <span className="absolute left-[46px] top-[147px] text-[#14c814]">y</span>
      <span className="absolute left-[45px] top-[163px] text-[#c81414]">x</span>
      <div className="absolute bottom-0 right-[22px] flex h-[13px] w-[14px] items-center justify-center rounded-t-[4px] bg-black/30">
        <svg width="7" height="7"><path d="M3.500 0v7M0 3.500h7" stroke="#909090" strokeWidth="2" /></svg>
      </div>
      <Corner className="right-0 top-0" />
      <Corner flip className="bottom-0 left-0" />
    </div>
  );
}

const OUTLINER: [string, IconName, IconName[], number][] = [
  ["drzwi", "mesh", ["meshdata", "wrench"], 26],
  ["kontener1", "mesh", ["meshdata"], 50],
  ["kontener2", "mesh", ["meshdata"], 50],
  ["kosz 1", "mesh", ["meshdata", "wrench"], 31],
  ["kosz 3", "mesh", ["meshdata", "wrench"], 31],
  ["kosz2", "mesh", ["meshdata", "wrench"], 28],
  ["ksiezyc", "lamp", ["sundata"], 36],
  ["lampa na budynku", "lamp", ["spot"], 90],
  ["lampa na budynku.001", "lamp", ["anim", "spot"], 114],
  ["lampa na budynku.002", "lamp", ["spot"], 114],
  ["lampa na budynku.003", "lamp", ["spot"], 114],
  ["lampa na budynku.004", "lamp", ["spot"], 114],
  ["lampa na budynku.005", "lamp", ["spot"], 114],
  ["linie", "curve", ["curvedata"], 23],
  ["mur", "mesh", ["meshdata"], 19],
  ["obwod linii", "curve", ["curvedata"], 53],
];

function Outliner() {
  return (
    <div className="relative flex h-[344px] w-[928px] flex-col overflow-hidden">
      <div className={`h-[26px] ${HEADER}`}>
        <EditorSelect icon="tree" />
        <Menu label="View" w={45} className="ml-3" />
        <Menu label="Search" w={47} />
        <div className={`flex h-5 w-[119px] items-center justify-between rounded-[4px] pl-[7px] pr-[3px] text-white ${DARK}`}>
          <span className="tracking-[-0.5px]">All Scenes</span>
          <UpDown />
        </div>
        <div className={`ml-[5px] flex h-5 w-[111px] items-center rounded-[4px] border pl-[3px] ${FIELD}`}>
          <Icon name="search" />
        </div>
      </div>
      <div className="flex h-[318px] overflow-hidden border-t border-[#8a8a8a] bg-[#727272]">
        <div className="-mt-[4px] flex w-[911px] flex-col">
          {OUTLINER.map(([label, icon, data, w], i) => (
            <div key={i} className={`flex h-5 shrink-0 items-center ${i % 2 ? "bg-[#797979]" : "bg-[#717171]"}`}>
              <div className="relative ml-[22px] flex h-5 w-[20px] shrink-0 items-center">
                <div className="absolute left-[8px] top-0 h-5 w-px bg-[#4a4a4a]" />
                <div className="absolute left-[8px] top-[10px] h-px w-3 bg-[#4a4a4a]" />
                <Icon name="expand" className="relative" />
              </div>
              <div className={`flex h-[18px] w-[18px] items-center justify-center rounded-full ${i === 6 ? "bg-[#b08b5f]" : ""}`}>
                <Icon name={icon} />
              </div>
              <span className={`ml-[3px] shrink-0 whitespace-nowrap pt-[2px] ${i === 6 ? "text-white" : ""} tracking-[-0.61px]`} style={{ width: w + 11 }}>
                {label}
              </span>
              <div className="h-3 w-[2px] bg-[#555]" />
              <div className="ml-[10px] flex gap-[2px]">
                {data.map((d) => (
                  <div key={d} className={`flex h-[18px] w-[18px] items-center justify-center rounded-full ${d === "sundata" ? "bg-[#a9a9a4]" : ""}`}>
                    <Icon name={d} />
                  </div>
                ))}
              </div>
              <div className="ml-auto flex h-5">
                {(["eye", "cursor", "render"] as IconName[]).map((n) => (
                  <div key={n} className="flex w-[20px] items-center justify-center border-l border-[#5f5f5f]">
                    <Icon name={n} size={n === "render" ? 13 : 14} />
                  </div>
                ))}
              </div>
            </div>
          ))}
        </div>
        <div className="w-[17px] pt-[5px]">
          <div className="h-[309px] w-[13px] rounded-full bg-[#595959] pt-[103px]">
            <div className="h-[99px] w-[13px] rounded-full border border-[#484848] bg-gradient-to-r from-[#989898] to-[#777]" />
          </div>
        </div>
      </div>
      <Corner className="right-0 top-0" />
      <Corner flip className="bottom-0 left-0" />
    </div>
  );
}

function PanelTitle({ label, open = true }: { label: string; open?: boolean }) {
  return (
    <div className="-ml-[3px] flex h-[25px] w-[901px] items-center border-t border-[#474747] pl-[8px] pr-[5px] text-[12px] tracking-[-0.5px] shadow-[inset_0_1px_0_#8f8f8f]">
      <svg width="9" height="9" className="shrink-0">
        <path d={open ? "M0 0h9L4.500 8.500z" : "M0 0l9 4.500L0 9z"} fill="#242424" />
      </svg>
      <span className="ml-[3px] flex-1">{label}</span>
      <svg width="11" height="5">
        <path d="M0 1h11M0 4h11" stroke="#bdbdbd" strokeDasharray="1 2" />
        <path d="M1 2h11M1 5h11" stroke="#333" strokeDasharray="1 2" />
      </svg>
    </div>
  );
}

function Dropdown({ label, className = "" }: { label: string; className?: string }) {
  return (
    <div className={`flex h-5 items-center justify-between pl-[6px] pr-[3px] text-white ${DARK} ${className}`}>
      <span>{label}</span>
      <UpDown />
    </div>
  );
}

function FieldLabel({ children }: { children: string }) {
  return (
    <div className="flex h-5 items-center pl-[7px]">
      <span>{children}</span>
    </div>
  );
}

function Properties() {
  const tabs: IconName[] = ["render", "layers", "scene", "world", "object", "link", "sun", "texture", "physics"];
  return (
    <div className="relative flex h-[441px] w-[928px] flex-col overflow-hidden bg-[#727272]">
      <div className={`h-[26px] pb-px ${HEADER}`}>
        <EditorSelect icon="propedit" />
        <div className="ml-2 flex h-5">
          {tabs.map((t, i) => (
            <div
              key={t}
              className={`flex w-5 items-center justify-center border-y border-r border-[#222] ${i === 0 ? "rounded-l-[4px] border-l bg-[#5680c2]" : "bg-[#4a4a4a]"} ${i === 8 ? "rounded-r-[4px]" : ""}`}
            >
              <Icon name={t} className={i === 0 ? "" : "opacity-85"} />
            </div>
          ))}
        </div>
      </div>
      <div className="flex h-[415px] overflow-hidden border-t border-[#8a8a8a] [&_span]:pt-[2px]">
        <div className="w-[911px] shrink-0 pl-2">
          <div className="flex h-[35px] items-center pl-[2px] pt-px">
            <Icon name="pin" />
            <Icon name="scene" className="ml-[5px]" />
            <span className="ml-[4px]">Scene</span>
          </div>
          <PanelTitle label="Render" />
          <div className="mt-[7px] flex h-5 w-[895px] text-center">
            <div className={`flex w-[298px] items-center rounded-l-[5px] pl-[3px] ${LIGHT}`}>
              <Icon name="renderstar" />
              <span className="flex-1 pr-[4px]">Render</span>
            </div>
            <div className={`-ml-px flex w-[299px] items-center pl-[3px] ${LIGHT}`}>
              <Icon name="clapper" />
              <span className="flex-1 pr-[5px]">Animation</span>
            </div>
            <div className={`-ml-px flex w-[300px] items-center rounded-r-[5px] pl-[3px] ${LIGHT}`}>
              <Icon name="audio" />
              <span className="flex-1 pr-[5px]">Audio</span>
            </div>
          </div>
          <div className="mt-[5px] flex h-5 w-[895px] items-center">
            <span className="w-[300px] pl-[7px]">Display:</span>
            <Dropdown label="Image Editor" className="flex-1 rounded-l-[4px]" />
            <div className={`-ml-px flex h-5 w-[21px] items-center justify-center rounded-r-[4px] ${LIGHT}`}>
              <Icon name="unlock" />
            </div>
          </div>
          <div className="mt-[5px] flex h-5 w-[895px] items-center">
            <span className="w-[300px] pl-[7px]">Feature Set:</span>
            <Dropdown label="Supported" className="flex-1 rounded-[4px]" />
          </div>
          <div className="mt-[5px] flex h-5 w-[895px] items-center">
            <span className="w-[303px] pl-[7px]">Device:</span>
            <Dropdown label="CPU" className="flex-1 rounded-[4px]" />
          </div>
          <div className="h-[7px]" />
          <PanelTitle label="Dimensions" />
          <div className="mt-[8px] flex h-5 w-[895px]">
            <Dropdown label="Render Presets" className="flex-1 rounded-l-[4px]" />
            <div className={`-ml-px flex w-[21px] items-center justify-center ${LIGHT}`}><Icon name="plus" size={15} /></div>
            <div className={`-ml-px flex w-[21px] items-center justify-center rounded-r-[4px] ${LIGHT}`}><Icon name="minus" size={15} /></div>
          </div>
          <div className="mt-[5px] flex w-[895px] justify-between">
            <div className="w-[443px]">
              <FieldLabel>Resolution:</FieldLabel>
              <div className="overflow-hidden rounded-[9px] border border-[#333]">
                <NumField label="X:" value="1920 px" className="h-[19px]" />
                <NumField label="Y:" value="1080 px" className="h-5 border-t" />
                <div className={`flex h-5 items-center border-t ${FIELD}`}>
                  <div className="h-full w-[222px] bg-gradient-to-b from-[#676767] to-[#767676]" />
                  <span className="flex-1 pr-[14px] text-right tracking-normal">50%</span>
                </div>
              </div>
              <FieldLabel>Aspect Ratio:</FieldLabel>
              <div className="overflow-hidden rounded-[9px] border border-[#333]">
                <NumField label="X:" value="1.000" className="h-[18px]" />
                <NumField label="Y:" value="1.000" className="h-5 border-t" />
              </div>
              <div className="mt-[5px] flex h-[14px] items-center pl-[3px]">
                <div className={`h-[14px] w-[14px] rounded-[4px] ${DARK}`} />
                <span className="ml-[7px] w-[204px]">Border</span>
                <div className="h-[14px] w-[14px] rounded-[4px] border border-[#4a4a4a] bg-[#606060]" />
                <span className="ml-[7px] text-[#484848]">Crop</span>
              </div>
            </div>
            <div className="w-[444px]">
              <FieldLabel>Frame Range:</FieldLabel>
              <div className="overflow-hidden rounded-[9px] border border-[#333]">
                <NumField label="Start Frame:" value="145" className="h-[19px]" />
                <NumField label="End Frame:" value="2100" className="h-5 border-t" />
                <NumField label="Frame Step:" value="1" className="h-5 border-t" />
              </div>
              <FieldLabel>Frame Rate:</FieldLabel>
              <Dropdown label="24 fps" className="rounded-[4px]" />
              <FieldLabel>Time Remapping:</FieldLabel>
              <div className="flex h-5">
                <NumField label="Old:" value="100" className="w-[222px] rounded-l-[10px] border" />
                <NumField label="New:" value="100" className="w-[222px] rounded-r-[10px] border border-l-0" />
              </div>
            </div>
          </div>
          <div className="h-[8px]" />
          <PanelTitle label="Metadata" open={false} />
        </div>
        <div className="w-[17px] pt-[5px]">
          <div className="h-[406px] w-[13px] rounded-full bg-[#595959]">
            <div className="h-[131px] w-[13px] rounded-full border border-[#484848] bg-gradient-to-r from-[#989898] to-[#777]" />
          </div>
        </div>
      </div>
      <Corner className="right-0 top-0" />
      <Corner flip className="bottom-0 left-0" />
    </div>
  );
}

function Jet({ label, shapes }: { label: string; shapes: [string, string][] }) {
  return (
    <div className="relative flex h-8 w-8 items-center justify-center">
      <svg width="32" height="32" viewBox="0 0 32 32" className="absolute inset-0">
        {shapes.map(([fill, d]) => (
          <path key={d} d={d} fill={fill} />
        ))}
      </svg>
      <div className="relative h-[21px] w-[21px] bg-black pl-[2px] pt-[1px] font-['Open_Sans'] text-[12px] font-bold leading-[13px] tracking-[-0.5px] text-white">
        {label}
        <div className="mt-[2px] h-[2px] w-2 bg-white" />
      </div>
    </div>
  );
}

const APPS: { key: string; active?: boolean; focus?: boolean; art: React.ReactNode }[] = [
  {
    key: "folder",
    active: true,
    art: (
      <svg width="30" height="32" viewBox="0 0 30 32">
        <path d="M2 6h10l2 3h13v6H2z" fill="#f3f3f3" />
        <path d="M1 11h28l-1 16.500H2z" fill="#b94f4f" />
        <path d="M1 11h28l-.5 6h-27z" fill="#cf7474" />
        <path d="M2 27.500h26" stroke="#6a2525" />
      </svg>
    ),
  },
  {
    key: "terminal",
    art: (
      <svg width="30" height="32" viewBox="0 0 30 32">
        <rect x="1" y="2" width="28" height="28" rx="2" fill="#d2d2d2" />
        <rect x="3.500" y="4.500" width="23" height="23" fill="#2f2f36" />
        <path d="m6 8 3 2.500L6 13M10 13.500h4.500" stroke="#fff" strokeWidth="1.400" fill="none" />
      </svg>
    ),
  },
  {
    key: "atom",
    art: (
      <svg width="30" height="32" viewBox="0 0 30 32">
        <circle cx="15" cy="16" r="14" fill="#4fb183" />
        <circle cx="15" cy="13" r="11" fill="#7fcf9c" opacity=".5" />
        <g fill="none" stroke="#e6f6ec" strokeWidth="1.200">
          <ellipse cx="15" cy="16" rx="10" ry="3.800" transform="rotate(15 15 16)" />
          <ellipse cx="15" cy="16" rx="10" ry="3.800" transform="rotate(75 15 16)" />
          <ellipse cx="15" cy="16" rx="10" ry="3.800" transform="rotate(135 15 16)" />
        </g>
        <circle cx="15" cy="16" r="1.500" fill="#fff" />
      </svg>
    ),
  },
  {
    key: "idea",
    art: (
      <Jet
        label="IJ"
        shapes={[
          ["#087cfa", "M18 6 22 1 31 9V26L18 31 8 28V14z"],
          ["#fc801d", "M0 14 8 11 12 26 6 23 1 19z"],
          ["#fe3f6b", "M3 5 10 1 22 5 16 14 2 13z"],
        ]}
      />
    ),
  },
  {
    key: "mysql",
    art: (
      <svg width="31" height="32" viewBox="0 0 31 32">
        <rect x="0" y="1" width="31" height="30" rx="3" fill="#205880" />
        <path d="M5 4q7-1 11 5 3 4 5 10l6 6-5-1-1 5-4-6-3 1q-1-3-3-2l-2 5Q5 20 8 14L5 9z" fill="#1b4c70" stroke="#cfdde8" strokeWidth="1" />
        <path d="m23 4 5 5M28 3.500 24.500 8" stroke="#e8eef2" strokeWidth="1.800" />
      </svg>
    ),
  },
  {
    key: "chrome",
    active: true,
    art: (
      <svg width="29" height="32" viewBox="0 0 29 32">
        <rect x=".5" y="2" width="28" height="28" rx="2" fill="#fbc926" />
        <path d="M.5 4q0-2 2-2h24q2 0 2 2v8H14L7 18z" fill="#dd4437" />
        <path d="M.5 4 10 20l5 2-4 8H2.500q-2 0-2-2z" fill="#189b58" />
        <circle cx="14.500" cy="16" r="7" fill="#f4f4f4" />
        <circle cx="14.500" cy="16" r="5.400" fill="#4b7fc0" />
      </svg>
    ),
  },
  {
    key: "webstorm",
    art: (
      <Jet
        label="WS"
        shapes={[
          ["#00cdd7", "M1 6 10 1 18 3 30 12V22L20 28 3 25z"],
          ["#f4ee3c", "M18 2 26 1 31 9 26 18 18 10z"],
          ["#1f8fd8", "M5 18 16 26 27 23 22 30 8 32z"],
        ]}
      />
    ),
  },
  {
    key: "pycharm",
    art: (
      <div className="relative flex h-8 w-7 items-center justify-center">
        <svg width="28" height="28" viewBox="0 0 28 28" className="absolute">
          <path d="M0 0h28v28H0z" fill="#21d789" />
          <path d="M10 28 28 6v22z" fill="#fcf84a" />
          <path d="M18 0h10v12z" fill="#23c8c8" />
        </svg>
        <div className="relative h-[20px] w-[19px] bg-black pl-[2px] font-['Open_Sans'] text-[12px] font-bold leading-[13px] tracking-[-0.5px] text-white">
          PC
          <div className="mt-[2px] h-[2px] w-2 bg-white" />
        </div>
      </div>
    ),
  },
  {
    key: "blender",
    active: true,
    focus: true,
    art: (
      <svg width="30" height="32" viewBox="0 0 30 32">
        <rect x="1" y="2" width="28" height="28" rx="3" fill="#4668a0" />
        <path d="M4 20 13 13H6.500V10.500h8.500L13 8h4L25 15a7 6.300 0 1 1-14.500 3.500L7 22z" fill="#f18c22" />
        <circle cx="18" cy="18" r="4.600" fill="#fff" />
        <circle cx="18" cy="18" r="2.800" fill="#2c64ad" />
      </svg>
    ),
  },
  {
    key: "clion",
    art: (
      <Jet
        label="CL"
        shapes={[
          ["#1fcfae", "M2 7 11 2 22 4 31 10V20L26 29 14 31 2 21z"],
          ["#21d789", "M18 6 27 4 30 14 24 20z"],
          ["#e8489a", "M11 2 18 0 20 8 12 10z"],
          ["#0b9fd0", "M16 24 28 22 21 31 14 31z"],
        ]}
      />
    ),
  },
  {
    key: "gimp",
    active: true,
    art: (
      <svg width="29" height="32" viewBox="0 0 29 32">
        <rect x=".5" y="2" width="28" height="28" rx="2" fill="#cdb083" />
        <path d="M1 9h27M1 17h27M1 24h27" stroke="#bb9c6e" />
        <path d="M4 15 9 12l4 2 4-2 4 1 4-7q2 6-1 12-3 6-10 5L5 19z" fill="#57534e" />
        <circle cx="10.500" cy="14" r="1.900" fill="#fff" />
        <circle cx="15.500" cy="14" r="2" fill="#fff" />
        <circle cx="11" cy="14" r=".9" />
        <circle cx="15.500" cy="14" r=".9" />
        <circle cx="3.500" cy="16" r="2.200" fill="#111" />
        <path d="m15 21 6 3" stroke="#ddd" strokeWidth="1.500" />
        <path d="m20 23 7 4" stroke="#d9822b" strokeWidth="2.400" />
      </svg>
    ),
  },
];

function Taskbar() {
  return (
    <div className="flex h-[46px] shrink-0 border-t border-[#444] bg-[#2d2d2d]">
      <div className="flex w-[48px] shrink-0 items-center pl-[4px] pb-[2px]">
        <svg width="32" height="31" viewBox="0 0 32 31">
          <path d="M1 2h21q9 0 9 9v18H13Q4 29 4 20V9H1z" fill="#f4f4f4" stroke="#6cae35" strokeWidth="1.500" />
          <path d="M5 4h17q7 0 7 7v16H13q-7 0-7-7V8z" fill="#78b83e" />
          <path d="M9 6v13q0 5 5 5h7q4 0 4-4v-7q0-2.500-2.500-2.500T20 13v6M20 13q0-2.500-2.500-2.500T15 13v6" stroke="#fff" strokeWidth="2.300" fill="none" />
        </svg>
      </div>
      {APPS.map((a) => (
        <div key={a.key} className="flex w-[51px] shrink-0">
          <div className={`flex h-full w-[45px] items-center justify-center border-b-2 pr-px ${a.active ? "border-[#2472b8]" : "border-transparent"} ${a.focus ? "bg-[#414141]" : ""}`}>
            {a.art}
          </div>
        </div>
      ))}
      <div className="flex w-[56px] items-center justify-center pt-[2px]">
        <svg width="32" height="28" viewBox="0 0 32 28">
          <path d="M1 1h30v25H1z" fill="#c25b5b" />
          <path d="M4 6h24v15H4z" fill="#dd8484" opacity=".6" />
          <path d="M0 0h32v4H0z" fill="#f0f0f0" />
          <path d="M5 21h22v5H5z" fill="#5c2c30" stroke="#a04a4a" />
        </svg>
      </div>
      <div className="ml-auto flex items-center pr-[5px]">
        <svg width="16" height="20" viewBox="0 0 16 20">
          <rect x=".5" y=".5" width="15" height="19" rx="7.500" fill="#666" />
          <path d="m4 6 8 7-4 3.500v-13L12 7l-8 7" stroke="#fff" strokeWidth="1.400" fill="none" />
        </svg>
        <svg width="24" height="17" viewBox="0 0 24 17" className="ml-[8px]">
          <path d="M9 0h15v17H9z" fill="#76b900" />
          <path d="M1 8q5-6 10-5t8 5q-4 5-9 5T1 8z" fill="none" stroke="#76b900" strokeWidth="1.800" />
          <path d="M9 3q6-.5 10 5-4 5-10 5M9 5.500q4 0 6 2.500-2 3-6 3" fill="none" stroke="#26310f" strokeWidth="1.500" />
          <path d="M5 8q2-3 4-2.500 3 0 4 2.500" fill="none" stroke="#76b900" strokeWidth="1.300" />
        </svg>
        <div className="ml-[6px] h-[15px] w-5 overflow-hidden rounded-[1px]">
          <div className="h-[7px] bg-[#f6f6f6]" />
          <div className="h-2 bg-[#e01313]" />
        </div>
        <svg width="16" height="14" viewBox="0 0 16 14" className="ml-[10px]">
          <path d="M1 5q7-6 14 0" stroke="#777" strokeWidth="1.800" fill="none" />
          <path d="M3 7.500q5-4 10 0M5 10q3-2.300 6 0" stroke="#ddd" strokeWidth="1.800" fill="none" />
          <circle cx="8" cy="12" r="1.500" fill="#ddd" />
        </svg>
        <svg width="17" height="16" viewBox="0 0 17 16" className="ml-[8px]">
          <path d="M0 5h3l4-3.500v13L3 11H0z" fill="#ddd" />
          <path d="M9 5q2 3 0 6M11 3.500q3 4.500 0 9M13.500 1.500q4.500 6.500 0 13" stroke="#ddd" strokeWidth="1.400" fill="none" />
        </svg>
        <svg width="16" height="17" viewBox="0 0 16 17" className="ml-[8px]">
          <path d="M3 0h5v2h2.500v15H0V2h3z" fill="#ddd" />
          <path d="M2 5h6.500v9.500H2z" fill="#888" />
          <path d="m13 4-4 6h3l-1 5 4.500-6.500H13z" fill="#ddd" />
        </svg>
        <span className="ml-[8px] font-['Noto_Sans'] text-[12px] font-bold tracking-[-0.3px] text-[#d6d6d6]">15:00</span>
      </div>
    </div>
  );
}

function Annotations() {
  return (
    <svg width="700" height="270" viewBox="1250 640 700 270" className="pointer-events-none absolute left-[1250px] top-[640px]">
      <g fill="none" stroke="#dc1616" strokeWidth="13" strokeLinecap="round" strokeLinejoin="round" className="blur-[0.7px]">
        <path d="M1293 666Q1304 659 1315 659H1545Q1560 660 1573 666L1588 667Q1596 670 1596 680L1597 703Q1590 715 1577 720L1557 722 1535 729H1465L1440 723 1420 717 1385 714 1360 706 1327 701 1290 697Q1281 696 1281 688L1277 676 1279 662" />
        <path d="M1288 770 1293 787 1295 801Q1297 807 1304 807H1325L1338 809 1347 807H1557L1580 812H1740L1760 811 1777 807H1797L1812 802 1825 801 1840 796H1895Q1902 796 1902 787" />
        <path d="M1652 864H1590L1577 868 1560 869 1517 870 1500 866 1457 864 1450 870 1454 884 1465 890" />
      </g>
    </svg>
  );
}

export default function App() {
  return (
    <div className="relative flex h-[1080px] w-[1920px] flex-col overflow-hidden bg-black font-['DejaVu_Sans',sans-serif] text-[11px] leading-[14px] tracking-[-0.65px] text-[#0a0a0a]">
      <div className="relative flex h-[27px] shrink-0 items-center justify-center bg-[#2d2d2d] pt-[3px] font-['Noto_Sans',sans-serif] text-[14px] font-bold tracking-[-0.33px] text-[#cfcfcf]">
        Blender* [/home/robertdev/Documents/grafika/grafika/mis15.blend]
        <div className="absolute right-[10px] top-[5px] flex items-center gap-[20px]">
          <div className="h-[2px] w-[6px] bg-[#a5a5a5]" />
          <svg width="8" height="8"><path d="M2.500 0H8v5.500zM0 2.500V8h5.500z" fill="#999" /></svg>
          <svg width="15" height="15" viewBox="0 0 15 15">
            <circle cx="7.500" cy="7.500" r="7.200" fill="#9cb67c" />
            <path d="m5 5 5 5M10 5l-5 5" stroke="#2d2d2d" strokeWidth="1.800" />
          </svg>
        </div>
      </div>
      <InfoHeader />
      <div className="flex h-[981px] shrink-0 gap-px pt-px">
        <div className="flex w-[991px] flex-col gap-px">
          <div className="flex gap-px">
            <DopeSheet />
            <ImageEditor />
          </div>
          <Timeline />
        </div>
        <div className="flex w-[928px] flex-col gap-px">
          <Viewport />
          <Outliner />
          <Properties />
        </div>
      </div>
      <Taskbar />
      <Annotations />
    </div>
  );
}
